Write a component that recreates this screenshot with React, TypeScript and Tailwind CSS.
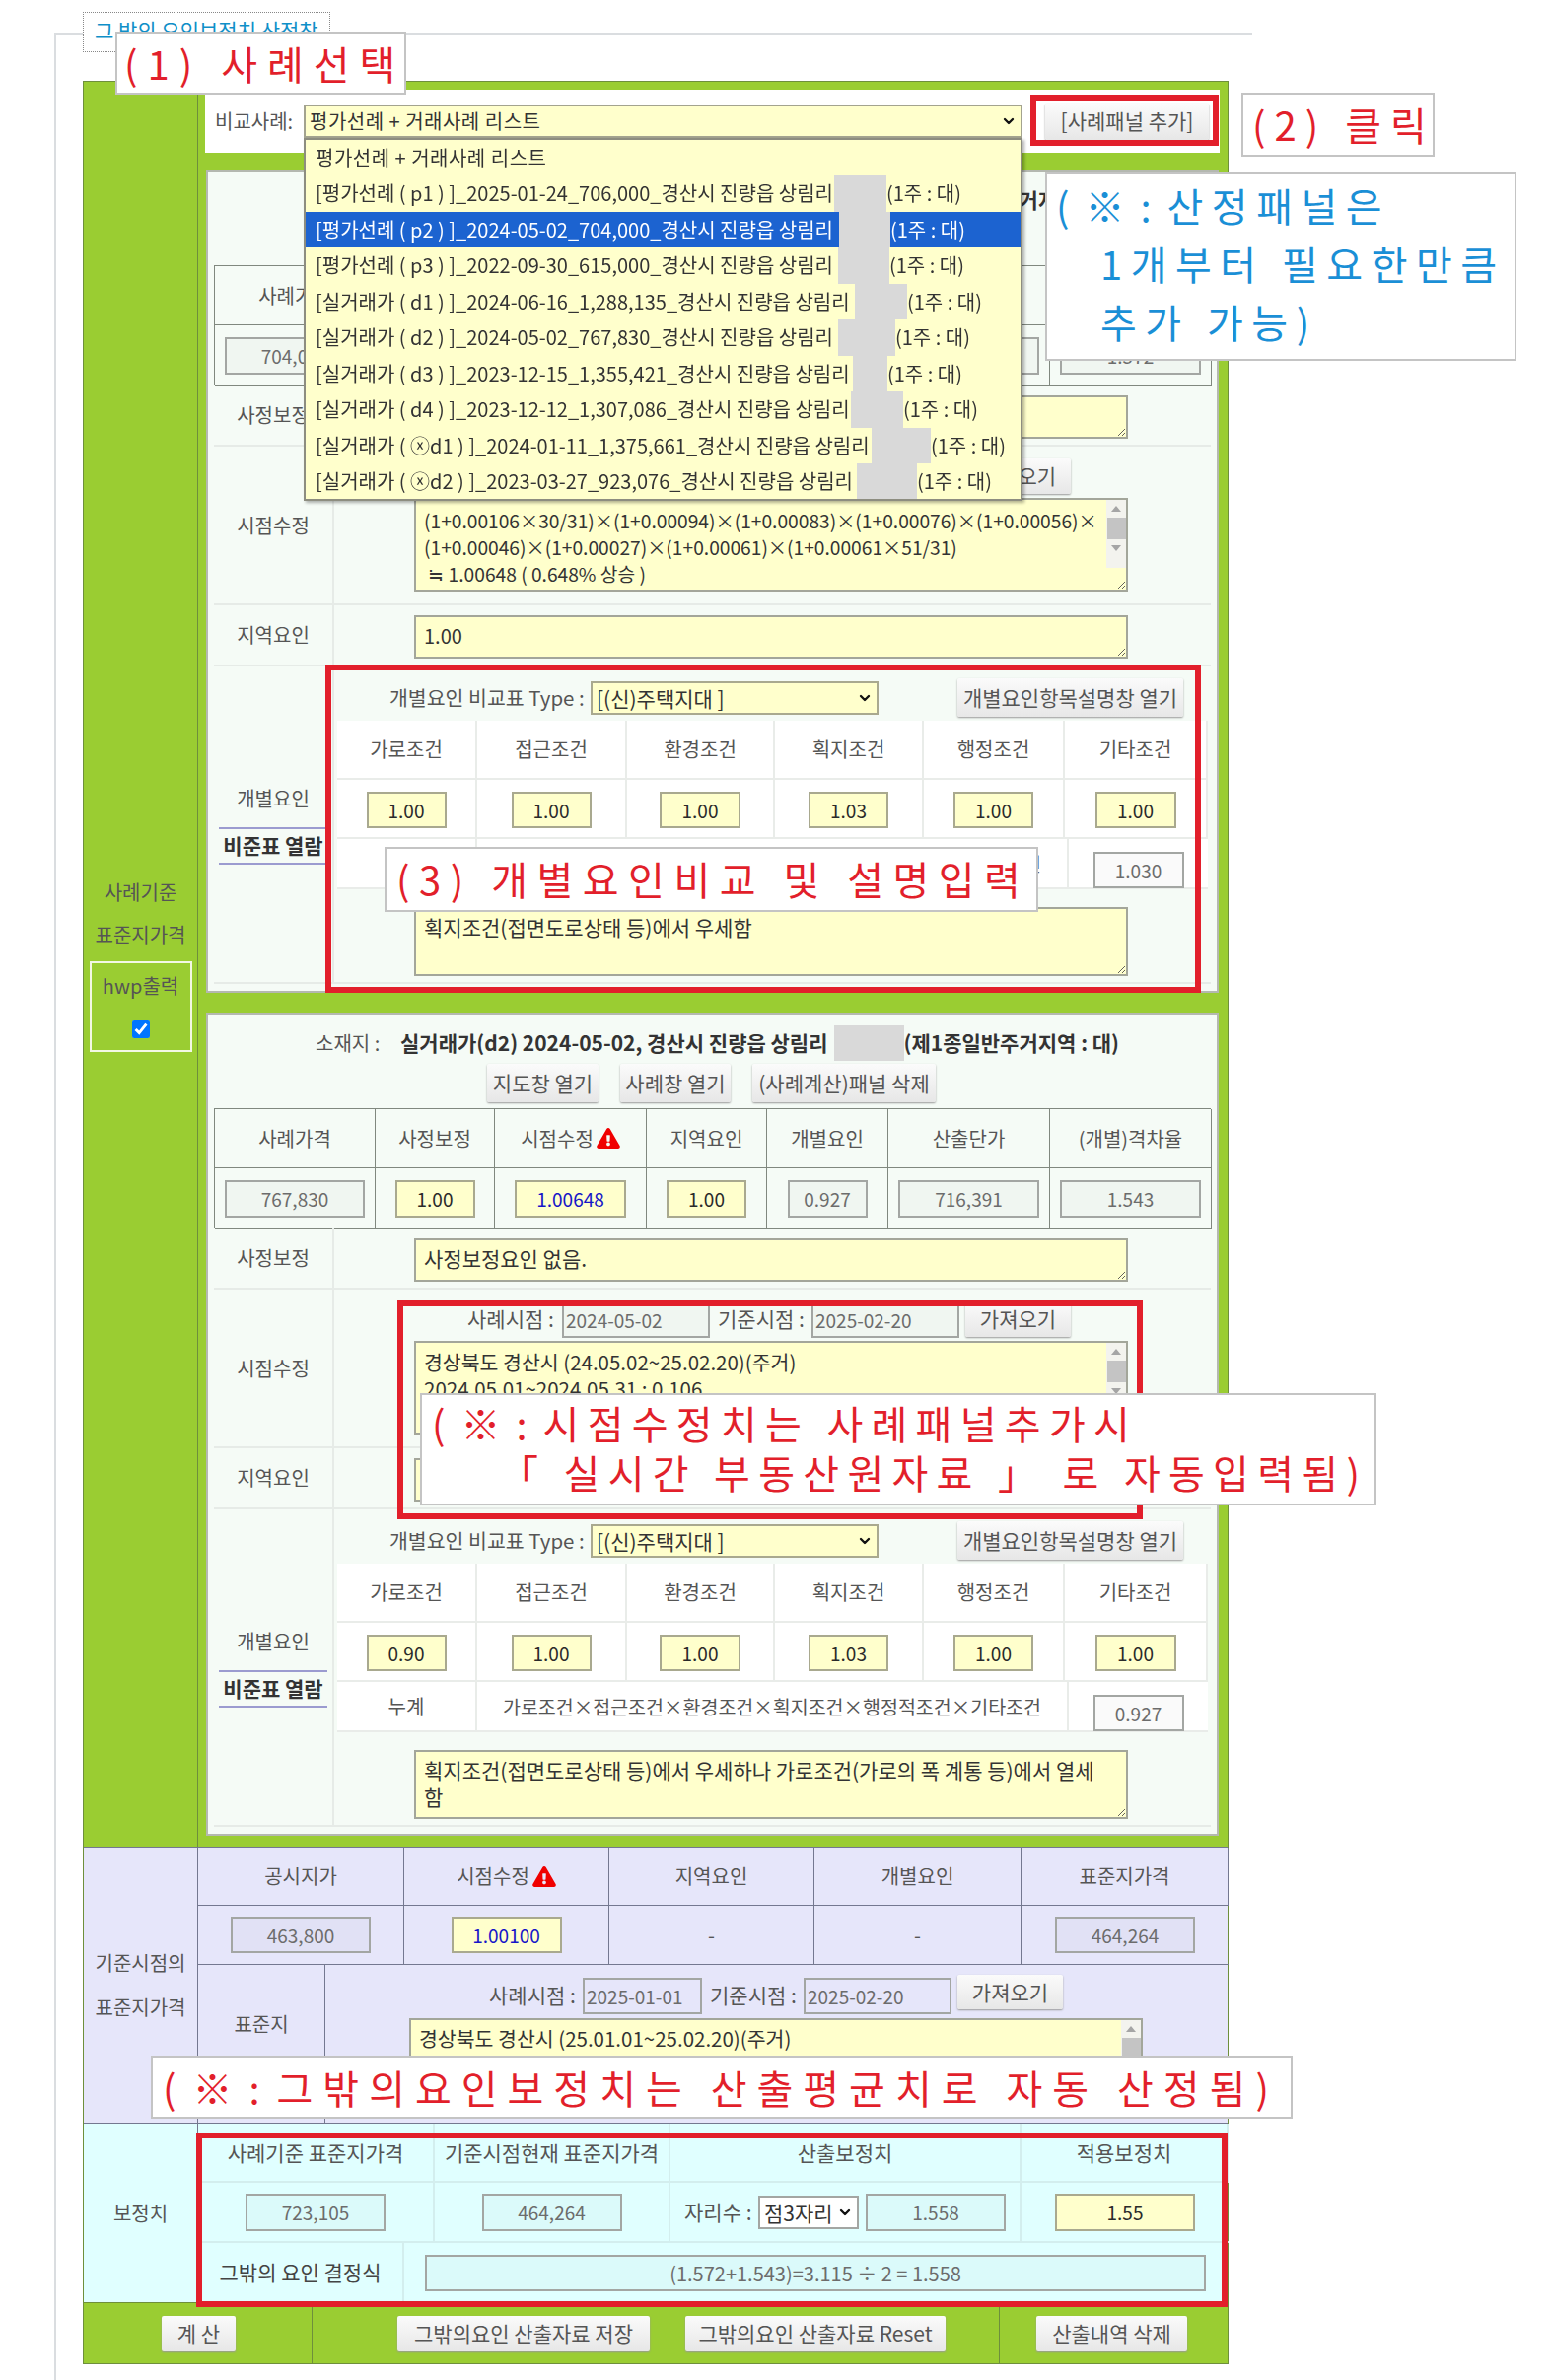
import type { ReactNode } from "react";
import { ChevronDown } from "lucide-react";
import { FaExclamationTriangle } from "react-icons/fa";

const dropdownRows = [
  { text: "[평가선례 ( p1 ) ]_2025-01-24_706,000_경산시 진량읍 상림리", textW: "w-[526px]", maskW: "w-[53px]" },
  { text: "[평가선례 ( p2 ) ]_2024-05-02_704,000_경산시 진량읍 상림리", textW: "w-[531px]", maskW: "w-[52px]", active: true },
  { text: "[평가선례 ( p3 ) ]_2022-09-30_615,000_경산시 진량읍 상림리", textW: "w-[530px]", maskW: "w-[52px]" },
  { text: "[실거래가 ( d1 ) ]_2024-06-16_1,288,135_경산시 진량읍 상림리", textW: "w-[547px]", maskW: "w-[53px]" },
  { text: "[실거래가 ( d2 ) ]_2024-05-02_767,830_경산시 진량읍 상림리", textW: "w-[530px]", maskW: "w-[58px]" },
  { text: "[실거래가 ( d3 ) ]_2023-12-15_1,355,421_경산시 진량읍 상림리", textW: "w-[545px]", maskW: "w-[35px]" },
  { text: "[실거래가 ( d4 ) ]_2023-12-12_1,307,086_경산시 진량읍 상림리", textW: "w-[543px]", maskW: "w-[53px]" },
  { text: "[실거래가 ( ⓧd1 ) ]_2024-01-11_1,375,661_경산시 진량읍 상림리", textW: "w-[564px]", maskW: "w-[60px]" },
  { text: "[실거래가 ( ⓧd2 ) ]_2023-03-27_923,076_경산시 진량읍 상림리", textW: "w-[549px]", maskW: "w-[61px]" },
];

const btn =
  "flex items-center justify-center whitespace-nowrap rounded-[2px] bg-linear-to-b from-[#fbfbfb] to-[#e7e7e7] text-[21px] text-[#555] shadow-[0_1px_2px_#999]";
const field = "rounded-none border-2 text-center text-[19px] outline-none";
const readOnlyField = `${field} border-[#a3a6a3] bg-black/[0.02] text-[#6c6c6c]`;
const yellowField = `${field} border-[#a9a98f] bg-[#ffffcc] text-[#2a2a2a]`;
const blueField = `${field} border-[#a9a98f] bg-[#ffffcc] text-[#1616c8]`;
const dateField = "h-[37px] rounded-none border-2 border-[#a3a6a3] bg-black/[0.02] pl-[2px] text-[19px] text-[#6c6c6c] outline-none";
const memo = "block rounded-none border-2 border-[#a3a69a] bg-[#ffffcc] px-[8px] py-[5px] leading-[27px] text-[#333] outline-none";

function Warn() {
  return <FaExclamationTriangle className="ml-[3px] inline-block h-[21px] w-[24px] text-[#f00000]" />;
}

function Callout({ className, children }: { className: string; children: ReactNode }) {
  return (
    <div className={`absolute z-30 whitespace-pre border-2 border-[#c4c4c4] bg-white ${className}`}>
      {children}
    </div>
  );
}

function Frame({ className }: { className: string }) {
  return <div className={`pointer-events-none absolute z-20 border-[6px] border-[#e21f2b] ${className}`} />;
}

function Sel({ className, selectClass, value }: { className: string; selectClass: string; value: string }) {
  return (
    <div className={`relative shrink-0 ${className}`}>
      <select className={`block h-full w-full appearance-none border-2 pl-[4px] text-[#333] outline-none ${selectClass}`}>
        <option>{value}</option>
      </select>
      <ChevronDown strokeWidth={3.5} className="pointer-events-none absolute right-[6px] top-1/2 h-[16px] w-[16px] -translate-y-1/2 text-[#111]" />
    </div>
  );
}

function Scroll() {
  return (
    <div className="absolute bottom-[24px] right-[2px] top-[2px] flex w-[20px] flex-col items-center bg-[#f3f3ee]">
      <span className="mt-[6px] h-0 w-0 border-x-[5px] border-b-[6px] border-x-transparent border-b-[#a5a5a5]" />
      <span className="mt-[6px] h-[22px] w-[19px] bg-[#c4c4c4]" />
      <span className="mt-[6px] h-0 w-0 border-x-[5px] border-t-[6px] border-x-transparent border-t-[#a5a5a5]" />
    </div>
  );
}

function LabelRow({ label, className, children }: { label: ReactNode; className: string; children: ReactNode }) {
  return (
    <div className={`grid grid-cols-[122px_1fr] border-b-2 border-[#e6ebe7] ${className}`}>
      <div className="flex flex-col items-center justify-center border-r-2 border-[#e6ebe7]">{label}</div>
      <div className="min-w-0">{children}</div>
    </div>
  );
}

interface PanelProps {
  before: string;
  after: string;
  price: string;
  eventText: string;
  adjust: string;
  unit: string;
  rate: string;
  caseDate: string;
  timeText: string;
  timeClass: string;
  factors: string[];
  total: string;
  note: string;
}

function CasePanel(p: PanelProps) {
  const heads = ["사례가격", "사정보정", "시점수정", "지역요인", "개별요인", "산출단가", "(개별)격차율"];
  const factorNames = ["가로조건", "접근조건", "환경조건", "획지조건", "행정조건", "기타조건"];
  const factorCols = ["w-[142px]", "w-[152px]", "w-[150px]", "w-[151px]", "w-[143px]", "w-[145px]"];
  const factorInputs = ["w-[81px]", "w-[81px]", "w-[82px]", "w-[81px]", "w-[81px]", "w-[82px]"];
  return (
    <section className="ml-[8px] h-[835px] w-[1027px] border-2 border-[#b4b8b0] bg-[#f5fbf6] px-[6px] text-[20px] text-[#555]">
      <div className="flex h-[50px] items-center pl-[103px] pt-[8px] whitespace-nowrap">
        <span className="w-[86px]">소재지 :</span>
        <b className="text-[21px] text-[#333]">{p.before}</b>
        <span className="ml-[6px] h-[36px] w-[71px] shrink-0 bg-[#d9d9d9]" />
        <b className="text-[21px] text-[#333]">{p.after}</b>
      </div>
      <div className="flex h-[39px] pl-[277px]">
        <button className={`${btn} w-[113px]`}>지도창 열기</button>
        <button className={`${btn} ml-[22px] w-[112px]`}>사례창 열기</button>
        <button className={`${btn} ml-[22px] w-[186px]`}>(사례계산)패널 삭제</button>
      </div>
      <div className="mt-[6px] grid h-[122px] grid-cols-[163px_121px_154px_122px_123px_164px_164px] grid-rows-[60px_62px] border-l border-t border-[#80887f]">
        {heads.map((h) => (
          <div key={h} className="flex items-center justify-center border-b border-r border-[#80887f]">
            {h}
            {h === "시점수정" && <Warn />}
          </div>
        ))}
        <div className="flex items-center justify-center border-b border-r border-[#80887f]">
          <input readOnly value={p.price} className={`${readOnlyField} h-[38px] w-[142px]`} />
        </div>
        <div className="flex items-center justify-center border-b border-r border-[#80887f]">
          <input readOnly value="1.00" className={`${yellowField} h-[38px] w-[81px]`} />
        </div>
        <div className="flex items-center justify-center border-b border-r border-[#80887f]">
          <input readOnly value="1.00648" className={`${blueField} h-[38px] w-[113px]`} />
        </div>
        <div className="flex items-center justify-center border-b border-r border-[#80887f]">
          <input readOnly value="1.00" className={`${yellowField} h-[38px] w-[81px]`} />
        </div>
        <div className="flex items-center justify-center border-b border-r border-[#80887f]">
          <input readOnly value={p.adjust} className={`${readOnlyField} h-[38px] w-[81px]`} />
        </div>
        <div className="flex items-center justify-center border-b border-r border-[#80887f]">
          <input readOnly value={p.unit} className={`${readOnlyField} h-[38px] w-[143px]`} />
        </div>
        <div className="flex items-center justify-center border-b border-r border-[#80887f]">
          <input readOnly value={p.rate} className={`${readOnlyField} h-[38px] w-[143px]`} />
        </div>
      </div>

      <LabelRow label="사정보정" className="h-[62px]">
        <textarea readOnly defaultValue={p.eventText} className={`${memo} ml-[81px] mt-[10px] h-[44px] w-[724px] py-[4px] text-[21px]`} />
      </LabelRow>

      <LabelRow label="시점수정" className="h-[161px]">
        <div className="flex h-[41px] items-start pl-[135px] pt-[12px] whitespace-nowrap">
          <span className="mt-[2px] w-[96px] text-[21px]">사례시점 :</span>
          <input readOnly value={p.caseDate} className={`${dateField} w-[150px]`} />
          <span className="ml-[8px] mt-[2px] w-[95px] text-[21px]">기준시점 :</span>
          <input readOnly value="2025-02-20" className={`${dateField} w-[150px]`} />
          <button className={`${btn} ml-[6px] h-[36px] w-[107px]`}>가져오기</button>
        </div>
        <div className="relative ml-[81px] mt-[11px] h-[95px] w-[724px]">
          <textarea readOnly defaultValue={p.timeText} className={`${memo} h-full w-full overflow-y-scroll pr-[26px] ${p.timeClass}`} />
          <Scroll />
        </div>
      </LabelRow>

      <LabelRow label="지역요인" className="h-[62px]">
        <textarea readOnly defaultValue="1.00" className={`${memo} ml-[81px] mt-[10px] h-[44px] w-[724px] py-[4px] text-[20px]`} />
      </LabelRow>

      <LabelRow
        label={
          <>
            <span>개별요인</span>
            <b className="mt-[14px] block w-[110px] border-y-2 border-[#9b9bd0] py-[1px] text-center text-[21px] whitespace-nowrap text-[#333]">
              비준표 열람
            </b>
          </>
        }
        className="h-[322px]"
      >
        <div className="flex h-[55px] items-center pl-[56px] pt-[8px] whitespace-nowrap">
          <span className="w-[204px] text-[20.5px]">개별요인 비교표 Type :</span>
          <Sel className="h-[34px] w-[292px]" selectClass="border-[#a9a98f] bg-[#ffffcc] text-[21px]" value="[(신)주택지대 ]" />
          <button className={`${btn} ml-[80px] h-[39px] w-[229px]`}>개별요인항목설명창 열기</button>
        </div>
        <div className="ml-[3px] w-[883px] bg-white">
          <div className="flex h-[60px] border-b-2 border-[#e9ece9]">
            {factorNames.map((name, i) => (
              <div key={name} className={`flex items-center justify-center border-r-2 border-[#e9ece9] ${factorCols[i]}`}>
                {name}
              </div>
            ))}
          </div>
          <div className="flex h-[60px] border-b-2 border-[#e9ece9]">
            {p.factors.map((v, i) => (
              <div key={factorNames[i]} className={`flex items-center justify-center border-r-2 border-[#e9ece9] pt-[2px] ${factorCols[i]}`}>
                <input readOnly value={v} className={`${yellowField} h-[37px] ${factorInputs[i]}`} />
              </div>
            ))}
          </div>
          <div className="flex h-[51px] border-b-2 border-[#e9ece9]">
            <div className="flex w-[142px] items-center justify-center border-r-2 border-[#e9ece9]">누계</div>
            <div className="flex w-[600px] items-center justify-center border-r-2 border-[#e9ece9] text-[19.5px] whitespace-nowrap">
              가로조건×접근조건×환경조건×획지조건×행정적조건×기타조건
            </div>
            <div className="flex flex-1 items-center justify-center">
              <input readOnly value={p.total} className={`${readOnlyField} mt-[14px] h-[37px] w-[92px]`} />
            </div>
          </div>
        </div>
        <textarea readOnly defaultValue={p.note} className={`${memo} ml-[81px] mt-[18px] h-[70px] w-[724px] text-[21px]`} />
      </LabelRow>
    </section>
  );
}

export default function App() {
  return (
    <div
      className="relative h-[2414px] w-[1572px] overflow-hidden bg-white text-[20px] text-[#555]"
      style={{ fontFamily: '"Noto Sans CJK KR", "Noto Sans", sans-serif' }}
    >
      <div className="ml-[55px] mt-[33px] h-[2381px] w-[1215px] border-l-2 border-t-2 border-[#dadde0] pl-[27px] pt-[47px]">
        <main className="w-[1162px] border border-[#6e8f3c]">
          <div className="grid grid-cols-[115px_1fr] bg-[#9acd32]">
            <div className="flex flex-col items-center justify-center pb-[6px]">
              <div className="flex h-[43px] items-center">사례기준</div>
              <div className="flex h-[43px] items-center">표준지가격</div>
              <div className="mt-[6px] flex h-[92px] w-[104px] flex-col items-center border-2 border-[#f2f8e4] pt-[8px]">
                <span>hwp출력</span>
                <input type="checkbox" defaultChecked className="mt-[20px] h-[18px] w-[18px] accent-[#0075ff]" />
              </div>
            </div>
            <div className="border-l border-[#6e8f3c] pb-[11px] pt-[8px]">
              <div className="ml-[7px] flex h-[64px] w-[1029px] items-center bg-white">
                <span className="w-[100px] pl-[10px]">비교사례:</span>
                <div className="relative">
                  <Sel className="h-[34px] w-[729px]" selectClass="border-[#a3a38f] bg-[#ffffcc] text-[20px] tracking-[0.5px]" value="평가선례 + 거래사례 리스트" />
                  <div className="absolute left-0 top-full z-10 h-[368px] w-[729px] overflow-hidden border-2 border-[#8d8d80] bg-[#ffffcc] text-[#333] shadow-[2px_2px_3px_rgba(0,0,0,0.3)]">
                    <div className="flex h-[36px] items-center whitespace-nowrap pl-[10px] tracking-[0.5px]">평가선례 + 거래사례 리스트</div>
                    {dropdownRows.map((row) => (
                      <div
                        key={row.text}
                        className={`flex h-[36.5px] items-stretch whitespace-nowrap pl-[10px] ${row.active ? "bg-[#1c63d0] text-white" : ""}`}
                      >
                        <span className={`flex shrink-0 items-center ${row.textW}`}>{row.text}</span>
                        <span className={`shrink-0 bg-[#d9d9d9] ${row.maskW}`} />
                        <span className="flex items-center">(1주 : 대)</span>
                      </div>
                    ))}
                  </div>
                </div>
                <button className={`${btn} ml-[23px] h-[37px] w-[166px]`}>[사례패널 추가]</button>
              </div>
              <div className="mt-[17px]">
                <CasePanel
                  before="평가선례(p2) 2024-05-02, 경산시 진량읍 상림리"
                  after="(제1종일반주거지역 : 대)"
                  price="704,000"
                  eventText="사정보정요인 없음."
                  adjust="1.030"
                  unit="729,000"
                  rate="1.572"
                  caseDate="2024-05-02"
                  timeText={"(1+0.00106×30/31)×(1+0.00094)×(1+0.00083)×(1+0.00076)×(1+0.00056)×\n(1+0.00046)×(1+0.00027)×(1+0.00061)×(1+0.00061×51/31)\n ≒ 1.00648 ( 0.648% 상승 )"}
                  timeClass="pt-[8px] text-[19.2px]"
                  factors={["1.00", "1.00", "1.00", "1.03", "1.00", "1.00"]}
                  total="1.030"
                  note="획지조건(접면도로상태 등)에서 우세함"
                />
              </div>
              <div className="mt-[20px]">
                <CasePanel
                  before="실거래가(d2) 2024-05-02, 경산시 진량읍 상림리"
                  after="(제1종일반주거지역 : 대)"
                  price="767,830"
                  eventText="사정보정요인 없음."
                  adjust="0.927"
                  unit="716,391"
                  rate="1.543"
                  caseDate="2024-05-02"
                  timeText={"경상북도 경산시 (24.05.02~25.02.20)(주거)\n2024.05.01~2024.05.31 : 0.106\n2024.06.01~2024.06.30 : 0.094\n2024.07.01~2024.07.31 : 0.083\n2024.08.01~2024.08.31 : 0.076"}
                  timeClass="pt-[6px] text-[20.5px]"
                  factors={["0.90", "1.00", "1.00", "1.03", "1.00", "1.00"]}
                  total="0.927"
                  note={"획지조건(접면도로상태 등)에서 우세하나 가로조건(가로의 폭 계통 등)에서 열세\n함"}
                />
              </div>
            </div>
          </div>

          <div className="grid h-[280px] grid-cols-[115px_1fr] border-t border-[#747890] bg-[#e6e6fa]">
            <div className="flex flex-col items-center justify-center">
              <div className="flex h-[45px] items-center">기준시점의</div>
              <div className="flex h-[45px] items-center">표준지가격</div>
            </div>
            <div className="border-l border-[#747890]">
              <div className="grid h-[119px] grid-cols-[209px_208px_208px_210px_210px] grid-rows-[59px_60px]">
                {["공시지가", "시점수정", "지역요인", "개별요인", "표준지가격"].map((h) => (
                  <div key={h} className="flex items-center justify-center border-b border-r border-[#747890] last:border-r-0">
                    {h}
                    {h === "시점수정" && <Warn />}
                  </div>
                ))}
                <div className="flex items-center justify-center border-b border-r border-[#747890]">
                  <input readOnly value="463,800" className={`${readOnlyField} h-[37px] w-[142px]`} />
                </div>
                <div className="flex items-center justify-center border-b border-r border-[#747890]">
                  <input readOnly value="1.00100" className={`${blueField} h-[37px] w-[112px]`} />
                </div>
                <div className="flex items-center justify-center border-b border-r border-[#747890]">-</div>
                <div className="flex items-center justify-center border-b border-r border-[#747890]">-</div>
                <div className="flex items-center justify-center border-b border-[#747890]">
                  <input readOnly value="464,264" className={`${readOnlyField} h-[37px] w-[142px]`} />
                </div>
              </div>
              <div className="grid h-[160px] grid-cols-[129px_1fr]">
                <div className="flex items-center justify-center border-r border-[#747890] pb-[40px]">표준지</div>
                <div>
                  <div className="flex h-[54px] items-start pl-[166px] pt-[13px] whitespace-nowrap">
                    <span className="mt-[2px] w-[95px] text-[21px]">사례시점 :</span>
                    <input readOnly value="2025-01-01" className={`${dateField} w-[121px] bg-transparent`} />
                    <span className="ml-[8px] mt-[2px] w-[95px] text-[21px]">기준시점 :</span>
                    <input readOnly value="2025-02-20" className={`${dateField} w-[150px] bg-transparent`} />
                    <button className={`${btn} -mt-[3px] ml-[6px] h-[35px] w-[107px]`}>가져오기</button>
                  </div>
                  <div className="relative ml-[85px] h-[93px] w-[744px]">
                    <textarea
                      readOnly
                      defaultValue={"경상북도 경산시 (25.01.01~25.02.20)(주거)\n2025.01.01~2025.01.31 : 0.053\n2025.02.01~2025.02.20 : 0.047\n(1+0.00053)×(1+0.00047)\n≒ 1.00100"}
                      className={`${memo} h-full w-full overflow-y-scroll pr-[26px] text-[20.5px]`}
                    />
                    <Scroll />
                  </div>
                </div>
              </div>
            </div>
          </div>

          <div className="grid h-[182px] grid-cols-[115px_1fr] border-t border-[#747890] bg-[#e0ffff]">
            <div className="flex items-center justify-center">보정치</div>
            <div className="border-l border-[#747890] text-[21px]">
              <div className="grid h-[121px] grid-cols-[240px_239px_356px_210px] grid-rows-[60px_61px]">
                {["사례기준 표준지가격", "기준시점현재 표준지가격", "산출보정치", "적용보정치"].map((h) => (
                  <div key={h} className="flex items-center justify-center border-b-2 border-r-2 border-[#d3eeee] pt-[2px] whitespace-nowrap">
                    {h}
                  </div>
                ))}
                <div className="flex items-center justify-center border-b-2 border-r-2 border-[#d3eeee]">
                  <input readOnly value="723,105" className={`${readOnlyField} h-[38px] w-[142px]`} />
                </div>
                <div className="flex items-center justify-center border-b-2 border-r-2 border-[#d3eeee]">
                  <input readOnly value="464,264" className={`${readOnlyField} h-[38px] w-[142px]`} />
                </div>
                <div className="flex items-center border-b-2 border-r-2 border-[#d3eeee] pl-[14px] whitespace-nowrap">
                  <span className="w-[75px]">자리수 :</span>
                  <Sel className="h-[34px] w-[102px]" selectClass="border-[#a3a6a3] bg-white text-[21px]" value="점3자리" />
                  <input readOnly value="1.558" className={`${readOnlyField} ml-[7px] h-[38px] w-[142px]`} />
                </div>
                <div className="flex items-center justify-center border-b-2 border-[#d3eeee]">
                  <input readOnly value="1.55" className={`${yellowField} h-[38px] w-[142px]`} />
                </div>
              </div>
              <div className="grid h-[60px] grid-cols-[209px_1fr]">
                <div className="flex items-center justify-center border-r-2 border-[#d3eeee] text-[#444]">그밖의 요인 결정식</div>
                <div className="flex items-center pl-[21px]">
                  <input readOnly value="(1.572+1.543)=3.115 ÷ 2 = 1.558" className={`${readOnlyField} h-[37px] w-[792px] text-[20px]`} />
                </div>
              </div>
            </div>
          </div>

          <div className="grid h-[62px] grid-cols-[231px_697px_1fr] border-t border-[#6e8f3c] bg-[#9acd32]">
            <div className="flex items-center pl-[79px]">
              <button className={`${btn} h-[36px] w-[75px]`}>계 산</button>
            </div>
            <div className="flex items-center border-l border-[#6e8f3c] pl-[86px]">
              <button className={`${btn} h-[36px] w-[256px]`}>그밖의요인 산출자료 저장</button>
              <button className={`${btn} ml-[36px] h-[36px] w-[264px]`}>그밖의요인 산출자료 Reset</button>
            </div>
            <div className="flex items-center border-l border-[#6e8f3c] pl-[37px]">
              <button className={`${btn} h-[36px] w-[153px]`}>산출내역 삭제</button>
            </div>
          </div>
        </main>
      </div>

      <div className="absolute left-[84px] top-[12px] h-[41px] w-[251px] whitespace-nowrap border border-dotted border-[#888] bg-white pl-[11px] pt-[2px] text-[21px] text-[#0f8fc8]">
        그 밖의 요인보정치 산정창
      </div>

      <Frame className="left-[1045px] top-[96px] h-[52px] w-[191px]" />
      <Frame className="left-[330px] top-[674px] h-[333px] w-[888px]" />
      <Frame className="left-[403px] top-[1319px] h-[222px] w-[756px]" />
      <Frame className="left-[199px] top-[2163px] h-[177px] w-[1046px]" />

      <Callout className="left-[117px] top-[32px] h-[64px] w-[295px] pl-[7px] text-[40px] leading-[60px] tracking-[10px] text-[#e21f2b]">
        (1) 사례선택
      </Callout>
      <Callout className="left-[1259px] top-[94px] h-[65px] w-[196px] pl-[9px] text-[40px] leading-[60px] tracking-[9px] text-[#e21f2b]">
        (2) 클릭
      </Callout>
      <Callout className="left-[1060px] top-[174px] h-[192px] w-[478px] pl-[9px] pt-[3px] text-[40px] leading-[59px] tracking-[8.5px] text-[#1a8fd6]">
        <span className="tracking-[3.5px]">{"( ※ : "}</span>
        {"산정패널은\n"}
        <span className="ml-[45px]">1개부터 필요한만큼{"\n"}</span>
        <span className="ml-[45px]">추가 가능)</span>
      </Callout>
      <Callout className="left-[390px] top-[859px] h-[66px] w-[663px] pl-[10px] text-[40px] leading-[60px] tracking-[9.5px] text-[#e21f2b]">
        (3) 개별요인비교 및 설명입력
      </Callout>
      <Callout className="left-[426px] top-[1413px] h-[114px] w-[970px] pl-[10px] pt-[3px] text-[40px] leading-[50px] tracking-[8.3px] text-[#e21f2b]">
        <span className="tracking-[3.5px]">{"( ※ : "}</span>
        {"시점수정치는 사례패널추가시\n"}
        <span className="ml-[68px]">「 실시간 부동산원자료 」 로 자동입력됨)</span>
      </Callout>
      <Callout className="left-[153px] top-[2085px] h-[64px] w-[1158px] pl-[10px] text-[40px] leading-[60px] tracking-[10px] text-[#e21f2b]">
        <span className="tracking-[4px]">{"( ※ : "}</span>
        그밖의요인보정치는 산출평균치로 자동 산정됨)
      </Callout>
    </div>
  );
}
